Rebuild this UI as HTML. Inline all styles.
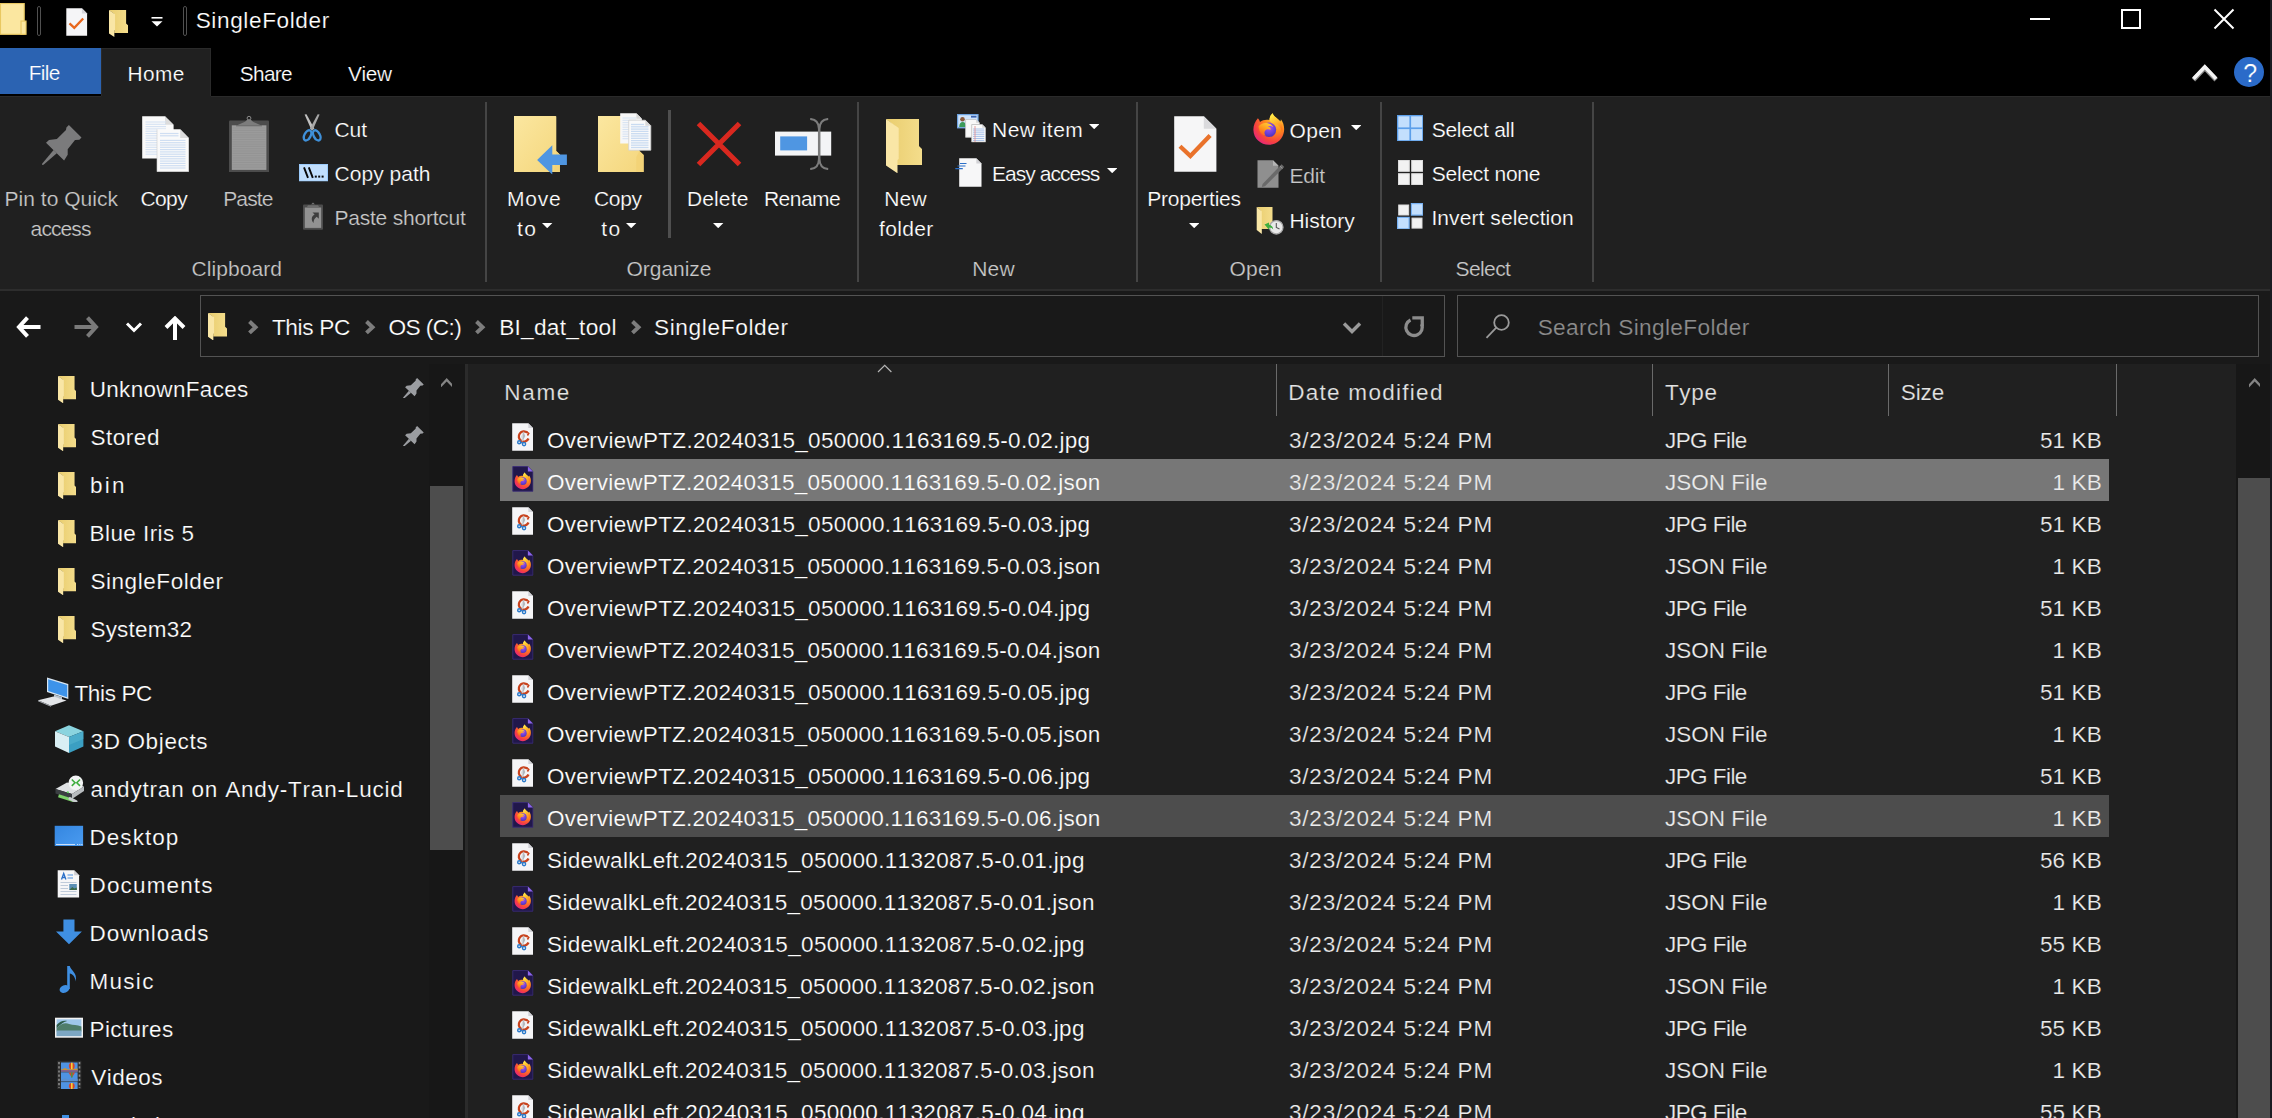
<!DOCTYPE html>
<html><head><meta charset="utf-8"><title>SingleFolder</title>
<style>
html,body{margin:0;padding:0;background:#000;}
body{width:2272px;height:1118px;position:relative;overflow:hidden;font-family:"Liberation Sans",sans-serif;font-kerning:none;}
body>div,body>span,body>svg{position:absolute;display:block;}
.t{white-space:pre;font-kerning:none;}
</style></head><body>
<svg width="0" height="0" style="left:0;top:0"><defs>
<linearGradient id="gfb" x1="0" y1="0" x2="1" y2="0"><stop offset="0" stop-color="#e9cd6e"/><stop offset="1" stop-color="#f4dd8c"/></linearGradient>
<linearGradient id="gfd" x1="0" y1="0" x2="1" y2="1"><stop offset="0" stop-color="#fbe7a0"/><stop offset="1" stop-color="#f4d67c"/></linearGradient>
<radialGradient id="gff" cx="0.75" cy="0.2" r="0.95"><stop offset="0" stop-color="#ffd03a"/><stop offset="0.4" stop-color="#ff8a1c"/><stop offset="0.75" stop-color="#f7413f"/><stop offset="1" stop-color="#e0208a"/></radialGradient>
<linearGradient id="gfy" x1="0.3" y1="0" x2="0.7" y2="1"><stop offset="0" stop-color="#fff14a"/><stop offset="0.5" stop-color="#ffb52b"/><stop offset="1" stop-color="#ff6a1c"/></linearGradient>
<radialGradient id="gfp" cx="0.5" cy="0.35" r="0.7"><stop offset="0" stop-color="#a855f0"/><stop offset="0.6" stop-color="#6a3fd8"/><stop offset="1" stop-color="#4a2fb0"/></radialGradient>
<linearGradient id="gfo" x1="0.8" y1="0" x2="0.2" y2="1"><stop offset="0" stop-color="#ffd23a"/><stop offset="0.5" stop-color="#ff9a1f"/><stop offset="1" stop-color="#ff5a1f"/></linearGradient>
<linearGradient id="gdesk" x1="0" y1="0" x2="1" y2="1"><stop offset="0" stop-color="#3486e0"/><stop offset="1" stop-color="#4a9bf0"/></linearGradient>

<symbol id="fold" viewBox="0 0 18.1 27" preserveAspectRatio="none"><path d="M0 0H16.3V13.4L18.1 15.2V23H5V4z" fill="url(#gfb)"/><path d="M0 0L5.8 4.2V19.9L5.1 20.3V27L0 23.4z" fill="#f9e6a6"/></symbol>

<symbol id="winfolder" viewBox="0 0 28 33" preserveAspectRatio="none">
<rect x="0.5" y="0.5" width="24.6" height="31.6" fill="#fbe7a0" stroke="#e9c861" stroke-width="1.2"/>
<rect x="21.8" y="18.5" width="5.2" height="13.6" fill="#fbe7a0" stroke="#e9c861" stroke-width="1.2"/>
</symbol>

<symbol id="propsmall" viewBox="0 0 22 28" preserveAspectRatio="none"><path d="M0.3 0.2h15.6l5.2 5.2v22.3h-20.8z" fill="#f5f5f7"/><path d="M15.9 0.2v5.2h5.2z" fill="#d5d5da"/>
<path d="M3.5 15.300L8.300 19.800 17.200 10.500" stroke="#e8661c" stroke-width="2.300" fill="none"/>
</symbol>

<symbol id="pinbig" viewBox="0 0 40 40" preserveAspectRatio="none">
<path d="M26.900 0L39.500 12.400L37.400 14.700L33 15L25.700 24.200L25.700 29.800L22.100 35.400L4 17.700L7 14.900L14.900 14L24 5.100L24.400 2.400z" fill="#7b7b7c"/>
<path d="M11.600 25L14.800 28.200L1.500 39.700L0 40L0.300 38.400z" fill="#7b7b7c"/>
</symbol>

<symbol id="copy" viewBox="0 0 47 56" preserveAspectRatio="none"><path d="M0.2 0.2h22.8l8.6 8.6v33.6h-31.4z" fill="#fafafa"/><path d="M23 0.2v8.6h8.6z" fill="#dcdcdc"/><path d="M3.5 6H24" stroke="#d5e2f3" stroke-width="1.1"/><path d="M3.5 8.3H24" stroke="#d5e2f3" stroke-width="1.1"/><path d="M3.5 10.6H24" stroke="#d5e2f3" stroke-width="1.1"/><path d="M3.5 12.9H24" stroke="#d5e2f3" stroke-width="1.1"/><path d="M3.5 15.2H24" stroke="#d5e2f3" stroke-width="1.1"/><path d="M3.5 17.5H24" stroke="#d5e2f3" stroke-width="1.1"/><path d="M3.5 19.8H24" stroke="#d5e2f3" stroke-width="1.1"/><path d="M3.5 22.1H24" stroke="#d5e2f3" stroke-width="1.1"/><path d="M3.5 24.4H24" stroke="#d5e2f3" stroke-width="1.1"/><path d="M3.5 26.7H24" stroke="#d5e2f3" stroke-width="1.1"/><path d="M3.5 29H24" stroke="#d5e2f3" stroke-width="1.1"/><path d="M3.5 31.3H24" stroke="#d5e2f3" stroke-width="1.1"/><path d="M3.5 33.6H24" stroke="#d5e2f3" stroke-width="1.1"/><path d="M3.5 35.9H24" stroke="#d5e2f3" stroke-width="1.1"/><path d="M3.5 38.2H24" stroke="#d5e2f3" stroke-width="1.1"/><path d="M15 13.3h23.2l8.6 8.6v33.8h-31.8z" fill="#fafafa"/><path d="M38.2 13.3v8.6h8.6z" fill="#dcdcdc"/><path d="M18 17.5H36.5" stroke="#cfdef2" stroke-width="1.2"/><path d="M18 19.8H36.5" stroke="#cfdef2" stroke-width="1.2"/><path d="M18 24.4H43.5" stroke="#cfdef2" stroke-width="1.2"/><path d="M18 26.7H43.5" stroke="#cfdef2" stroke-width="1.2"/><path d="M18 29H43.5" stroke="#cfdef2" stroke-width="1.2"/><path d="M18 31.3H43.5" stroke="#cfdef2" stroke-width="1.2"/><path d="M18 33.6H43.5" stroke="#cfdef2" stroke-width="1.2"/><path d="M18 35.9H43.5" stroke="#cfdef2" stroke-width="1.2"/><path d="M18 38.2H43.5" stroke="#cfdef2" stroke-width="1.2"/><path d="M18 40.5H43.5" stroke="#cfdef2" stroke-width="1.2"/><path d="M18 42.8H43.5" stroke="#cfdef2" stroke-width="1.2"/><path d="M18 45.1H43.5" stroke="#cfdef2" stroke-width="1.2"/><path d="M18 47.4H43.5" stroke="#cfdef2" stroke-width="1.2"/><path d="M18 49.7H43.5" stroke="#cfdef2" stroke-width="1.2"/><path d="M18 52H43.5" stroke="#cfdef2" stroke-width="1.2"/>
<path d="M15 13.300V55.700H46.800" stroke="#cfcfcf" stroke-width="0.6" fill="none"/>
</symbol>

<symbol id="paste" viewBox="0 0 40 58.500" preserveAspectRatio="none">
<circle cx="20" cy="4.200" r="1.900" fill="none" stroke="#8a8a8a" stroke-width="1"/>
<rect x="0" y="6.500" width="40" height="52" rx="1" fill="#4c4c4c"/>
<rect x="2.800" y="11.300" width="34.600" height="44.600" fill="#9b9b9b"/><path d="M3.5 14H36.5" stroke="#929292" stroke-width="0.8"/><path d="M3.5 16.3H36.5" stroke="#929292" stroke-width="0.8"/><path d="M3.5 18.6H36.5" stroke="#929292" stroke-width="0.8"/><path d="M3.5 20.9H36.5" stroke="#929292" stroke-width="0.8"/><path d="M3.5 23.2H36.5" stroke="#929292" stroke-width="0.8"/><path d="M3.5 25.5H36.5" stroke="#929292" stroke-width="0.8"/><path d="M3.5 27.8H36.5" stroke="#929292" stroke-width="0.8"/><path d="M3.5 30.1H36.5" stroke="#929292" stroke-width="0.8"/><path d="M3.5 32.4H36.5" stroke="#929292" stroke-width="0.8"/><path d="M3.5 34.7H36.5" stroke="#929292" stroke-width="0.8"/><path d="M3.5 37H36.5" stroke="#929292" stroke-width="0.8"/><path d="M3.5 39.3H36.5" stroke="#929292" stroke-width="0.8"/><path d="M3.5 41.6H36.5" stroke="#929292" stroke-width="0.8"/><path d="M3.5 43.9H36.5" stroke="#929292" stroke-width="0.8"/><path d="M3.5 46.2H36.5" stroke="#929292" stroke-width="0.8"/><path d="M3.5 48.5H36.5" stroke="#929292" stroke-width="0.8"/><path d="M3.5 50.8H36.5" stroke="#929292" stroke-width="0.8"/><path d="M3.5 53.1H36.5" stroke="#929292" stroke-width="0.8"/>
<path d="M7 11.800L16 7.800L18.500 5.500h3L24 7.800L33 11.800z" fill="#7c7c7c"/>
<path d="M7 11.800h26" stroke="#6a6a6a" stroke-width="1"/>
</symbol>

<symbol id="cut" viewBox="0 0 21 28" preserveAspectRatio="none">
<path d="M2.600 0.600L4.500 0.200L12.400 14.800L9.700 16.600z" fill="#c0c0c0"/>
<path d="M17.600 0.600L15.700 0.200L7.800 14.800L10.500 16.600z" fill="#a8a8a8"/>
<ellipse cx="5.500" cy="21.400" rx="3.100" ry="5.500" transform="rotate(28 5.500 21.400)" fill="none" stroke="#3f90d9" stroke-width="2.400"/>
<ellipse cx="14.800" cy="21.400" rx="3.100" ry="5.500" transform="rotate(-28 14.800 21.400)" fill="none" stroke="#3f90d9" stroke-width="2.400"/>
</symbol>

<symbol id="copypath" viewBox="0 0 29 17.500" preserveAspectRatio="none">
<rect x="0.500" y="0.500" width="28" height="16.500" fill="#c2dffd" stroke="#9ccbfb" stroke-width="1"/>
<path d="M5 3.300L9 13.800M9.800 3.300L13.800 13.800" stroke="#0a0a0a" stroke-width="1.900"/>
<rect x="15.800" y="11.600" width="2" height="2" fill="#0a0a0a"/><rect x="19.200" y="11.600" width="2" height="2" fill="#0a0a0a"/><rect x="22.600" y="11.600" width="2" height="2" fill="#0a0a0a"/>
</symbol>

<symbol id="pasteshort" viewBox="0 0 20 28" preserveAspectRatio="none">
<path d="M8 2.500L10 0.500L12 2.500z" fill="#777"/>
<rect x="0" y="2.500" width="20" height="25.300" rx="1" fill="#4d4d4d"/>
<rect x="1.800" y="5.500" width="16.400" height="20.400" fill="#929292"/>
<path d="M5 3.200h10l1.500 2.600h-13z" fill="#6e6e6e"/>
<path d="M9.500 10.500h6.300v6.300l-2.100-2.100c-2 1.500-3.200 3.300-3.200 6.300-2.800-3-2-7 1.100-8.400z" fill="#3d3d3d"/>
</symbol>

<symbol id="moveto" viewBox="0 0 54 58.500" preserveAspectRatio="none">
<path d="M0 0H41.500Q42.300 0 42.300 0.800V35L45.800 38.500V56H0z" fill="url(#gfd)"/>
<path d="M42.300 35L45.800 38.500V56H40z" fill="#f3d377"/>
<path d="M23.100 44.100L38.300 29.200V38.600H52.900V49.100H38.300V58.500z" fill="#4f96e2"/>
</symbol>

<symbol id="copyto" viewBox="0 0 54 59" preserveAspectRatio="none">
<path d="M0 3H41.500V38L45.600 42V59H0z" fill="url(#gfd)"/>
<path d="M38.300 44L41.500 38L45.600 42V59H38.300z" fill="#f3d377"/><path d="M22.2 0.2h16.2l5.5 5.5v24.7h-21.7z" fill="#f7f7f7"/><path d="M38.4 0.2v5.5h5.5z" fill="#d8d8d8"/><path d="M24.5 5H38" stroke="#d7e3f3" stroke-width="1.1"/><path d="M24.5 7.3H38" stroke="#d7e3f3" stroke-width="1.1"/><path d="M24.5 9.6H38" stroke="#d7e3f3" stroke-width="1.1"/><path d="M24.5 11.9H38" stroke="#d7e3f3" stroke-width="1.1"/><path d="M24.5 14.2H38" stroke="#d7e3f3" stroke-width="1.1"/><path d="M24.5 16.5H38" stroke="#d7e3f3" stroke-width="1.1"/><path d="M24.5 18.8H38" stroke="#d7e3f3" stroke-width="1.1"/><path d="M24.5 21.1H38" stroke="#d7e3f3" stroke-width="1.1"/><path d="M24.5 23.4H38" stroke="#d7e3f3" stroke-width="1.1"/><path d="M24.5 25.7H38" stroke="#d7e3f3" stroke-width="1.1"/><path d="M30.7 7.2h16.6l5.5 5.5v24.5h-22.1z" fill="#fafafa" stroke="#d0d0d0" stroke-width="0.8"/><path d="M47.3 7.2v5.5h5.5z" fill="#d8d8d8"/><path d="M33 11.5H46" stroke="#c9dbf1" stroke-width="1.3"/><path d="M33 13.8H50.5" stroke="#c9dbf1" stroke-width="1.3"/><path d="M33 16.1H50.5" stroke="#c9dbf1" stroke-width="1.3"/><path d="M33 18.4H50.5" stroke="#c9dbf1" stroke-width="1.3"/><path d="M33 20.7H50.5" stroke="#c9dbf1" stroke-width="1.3"/><path d="M33 23H50.5" stroke="#c9dbf1" stroke-width="1.3"/><path d="M33 25.3H50.5" stroke="#c9dbf1" stroke-width="1.3"/><path d="M33 27.6H50.5" stroke="#c9dbf1" stroke-width="1.3"/><path d="M33 29.9H50.5" stroke="#c9dbf1" stroke-width="1.3"/><path d="M33 32.2H50.5" stroke="#c9dbf1" stroke-width="1.3"/><path d="M33 34.5H50.5" stroke="#c9dbf1" stroke-width="1.3"/>
</symbol>

<symbol id="rename" viewBox="0 0 57 52" preserveAspectRatio="none">
<rect x="0" y="13.600" width="56.200" height="24" fill="#f3f4f6"/>
<rect x="5.200" y="18.400" width="26.900" height="14" fill="#4f96e2"/>
<path d="M35.200 1C40.500 1.300 43.800 4.500 44 11V41C43.800 47.500 40.500 50.700 35.200 51M53.200 1C47.900 1.300 44.600 4.500 44.400 11V41C44.600 47.500 47.900 50.700 53.200 51" stroke="#7c7c7c" stroke-width="2.100" fill="none"/>
</symbol>

<symbol id="newfolder" viewBox="0 0 36.400 54.300" preserveAspectRatio="none">
<path d="M0 0H33V27L36.400 30.400V46H10V8z" fill="url(#gfb)"/>
<path d="M0 0L12.700 9V40L11.500 41V54.300L0 46.500z" fill="#f9e6a6"/>
</symbol>

<symbol id="newitem" viewBox="0 0 29 28.500" preserveAspectRatio="none">
<rect x="0.600" y="0.600" width="20.400" height="13.200" fill="#cfe3fb" stroke="#6ea3e0" stroke-width="1.200"/>
<circle cx="5.500" cy="5.200" r="2.300" fill="#8a5a3c"/><path d="M2.200 13c0-3.500 1.500-5 3.500-5s3.500 1.500 3.500 5z" fill="#3c9a5a"/>
<rect x="14" y="1.800" width="5.500" height="1.800" fill="#3a62b0"/><path d="M8.6 5.5h10.5l3.3 3.3v14.5h-13.8z" fill="#f8f8f8" stroke="#c4c4c4" stroke-width="0.8"/><path d="M19.1 5.5v3.3h3.3z" fill="#d5d5d5"/><path d="M14.7 10.5h10.5l3.3 3.3v14.3h-13.8z" fill="#fbfbfb" stroke="#bdbdbd" stroke-width="0.8"/><path d="M25.2 10.5v3.3h3.3z" fill="#d5d5d5"/><path d="M16 15H27.3" stroke="#9fbbe8" stroke-width="0.9"/><path d="M16 16.9H27.3" stroke="#9fbbe8" stroke-width="0.9"/><path d="M16 18.8H27.3" stroke="#9fbbe8" stroke-width="0.9"/><path d="M16 20.7H27.3" stroke="#9fbbe8" stroke-width="0.9"/><path d="M16 22.6H27.3" stroke="#9fbbe8" stroke-width="0.9"/><path d="M16 24.5H27.3" stroke="#9fbbe8" stroke-width="0.9"/><path d="M16 26.4H27.3" stroke="#9fbbe8" stroke-width="0.9"/>
<path d="M18 12v16" stroke="#e58a8a" stroke-width="0.8"/>
</symbol>

<symbol id="easy" viewBox="0 0 27 29" preserveAspectRatio="none"><path d="M4.2 0.3h17.1l5.2 5.2v23.3h-22.3z" fill="#f7f7f8"/><path d="M21.3 0.3v5.2h5.2z" fill="#d2d2d6"/>
<path d="M5 5.500h6.500M2.500 8h8M0.300 10.600h7.500" stroke="#2b6fc8" stroke-width="1.100"/>
</symbol>

<symbol id="propbig" viewBox="0 0 43 56" preserveAspectRatio="none"><path d="M0.2 0.2h29.6l12.6 12.6v42.9h-42.2z" fill="#f6f6f7"/><path d="M29.8 0.2v12.6h12.6z" fill="#dadadd"/>
<path d="M6 30.200L16.400 40 36.100 19.500" stroke="#e9722b" stroke-width="4.300" fill="none"/>
</symbol>

<symbol id="firefox" viewBox="0 0 32 32" preserveAspectRatio="none"><path d="M4.900 5.300C6 6.500 6.600 7.700 7 9C9.500 7 13 6.200 16.500 7C16.500 4.500 17.800 1.800 19.700 0.200C20.500 3.500 24.500 5 27.200 8.500C27.800 8 28 7 27.900 6.200C30.500 9.500 31.600 14 31 18.500C30 26 23.500 31.800 16 31.800C7.500 31.800 0.600 25.500 0.400 17C0.300 12.500 2 8.500 4.900 5.300z" fill="url(#gff)"/><path d="M19.700 0.200C20.500 3.500 24.500 5 27.200 8.500C29.500 11.500 30 15.500 29 19.500C28.500 15 26 12 22 11C19 10.200 17 8.500 16.500 7C16.500 4.500 17.800 1.800 19.700 0.200z" fill="url(#gfy)"/><circle cx="16" cy="16.800" r="7.200" fill="url(#gfp)"/><path d="M5.500 13.500C7.500 10.500 11.500 9.300 15 10.200C17.500 10.800 19.500 12.300 20.300 14.200C18.500 13 16.500 12.800 15 13.500C17 14 18 15.500 17.500 16.800C16 15.800 13.500 16 12.300 17.500C11 19 11.300 21.300 12.800 22.800C9 22.300 6.300 19.500 5.500 13.500z" fill="url(#gfo)"/></symbol>

<symbol id="edit" viewBox="0 0 28 28" preserveAspectRatio="none"><path d="M0.5 0.2h15.5l5.5 5.5v22h-21z" fill="#8f8f8f"/><path d="M16 0.2v5.5h5.5z" fill="#b5b5b5"/>
<path d="M24.600 4.300L27.200 6.900L8 26.200L4.800 27L5.600 24z" fill="#6a6a6a"/>
<path d="M22.900 6L25.500 8.600" stroke="#9a9a9a" stroke-width="1"/>
</symbol>

<symbol id="history" viewBox="0 0 28.500 28" preserveAspectRatio="none">
<path d="M0.700 0H16.500V13L17 22H5V4z" fill="url(#gfb)"/>
<path d="M0.700 0L5.800 4.200V27L0.700 23z" fill="#f9e6a6"/>
<circle cx="20.300" cy="20.300" r="6.700" fill="#e9e9e9" stroke="#a9a9a9" stroke-width="1.300"/>
<path d="M20.300 16v4.500l3.200 1.500" stroke="#555" stroke-width="1.100" fill="none"/>
<path d="M8.500 17.500l4.500-2v2.300c2.300.3 4 2 4.200 4.600-1.200-1.500-2.500-2-4.200-2v2.400z" fill="#3fae3f"/>
</symbol>

<symbol id="selall" viewBox="0 0 26.500 26.500" preserveAspectRatio="none">
<rect x="0" y="0" width="26.500" height="26.500" fill="#5c9fea"/>
<rect x="1.300" y="1.300" width="11.100" height="11.100" fill="#c3dffd"/>
<rect x="14.100" y="1.300" width="11.100" height="11.100" fill="#c3dffd"/>
<rect x="1.300" y="14.100" width="11.100" height="11.100" fill="#c3dffd"/>
<rect x="14.100" y="14.100" width="11.100" height="11.100" fill="#c3dffd"/>
</symbol>

<symbol id="selnone" viewBox="0 0 25 25" preserveAspectRatio="none">
<rect x="0.500" y="0.500" width="10.800" height="10.800" fill="#f2f2f2" stroke="#dcdcdc" stroke-width="1"/>
<rect x="13.700" y="0.500" width="10.800" height="10.800" fill="#f2f2f2" stroke="#dcdcdc" stroke-width="1"/>
<rect x="0.500" y="13.700" width="10.800" height="10.800" fill="#f2f2f2" stroke="#dcdcdc" stroke-width="1"/>
<rect x="13.700" y="13.700" width="10.800" height="10.800" fill="#f2f2f2" stroke="#dcdcdc" stroke-width="1"/>
</symbol>

<symbol id="selinv" viewBox="0 0 26.500 26.500" preserveAspectRatio="none">
<rect x="1.700" y="2" width="10" height="10" fill="#f2f2f2" stroke="#dcdcdc" stroke-width="1"/>
<rect x="14.400" y="0.600" width="11.500" height="11.500" fill="#c3dffd" stroke="#76b1f3" stroke-width="1.200"/>
<rect x="0.600" y="14.400" width="11.500" height="11.500" fill="#c3dffd" stroke="#76b1f3" stroke-width="1.200"/>
<rect x="15" y="15.100" width="10" height="10" fill="#f2f2f2" stroke="#dcdcdc" stroke-width="1"/>
</symbol>

<symbol id="pinsm" viewBox="0 0 40 40" preserveAspectRatio="none">
<path d="M26.900 0L39.500 12.400L37.400 14.700L33 15L25.700 24.200L25.700 29.800L22.100 35.400L4 17.700L7 14.900L14.900 14L24 5.100L24.400 2.400z" fill="#9b9da1"/>
<path d="M11.300 24.500L15.300 28.500L2 39.800L0 40L0.300 37.800z" fill="#9b9da1"/>
</symbol>

<symbol id="thispc" viewBox="0 0 32 30" preserveAspectRatio="none">
<path d="M10 0.500L31.300 7V22L10 15z" fill="#d9e6f2"/>
<path d="M11.200 2.300L30.200 8V20.200L11.200 14z" fill="#3d93ea"/>
<path d="M17 17.500l8 2.500v2.200l-8-1.500z" fill="#b9c4cf"/>
<path d="M1 23.200L16.500 19.500L29.500 23.500L14 28.800z" fill="#e3e5e8"/>
<path d="M1 23.200L14 28.800v1L1 24.200z" fill="#a9adb3"/>
</symbol>

<symbol id="obj3d" viewBox="0 0 31 31" preserveAspectRatio="none">
<path d="M1 8.200L15 2.200L29.400 8.200L15 14z" fill="#8ad4df"/>
<path d="M1 8.200L15 14V30L1 23.500z" fill="#d9eff4"/>
<path d="M29.400 8.200L15 14V30L29.400 23.500z" fill="#3b9fc2"/>
<path d="M15 14L29.400 8.200V16L15 22z" fill="#56b5cf" opacity="0.6"/>
</symbol>

<symbol id="netdrive" viewBox="0 0 31 31" preserveAspectRatio="none">
<path d="M1.500 18L13 11.500L30 15.500L18 23z" fill="#dfe2e4"/>
<path d="M1.500 18L18 23V28L1.500 22.500z" fill="#3b3f42"/>
<path d="M18 23L30 15.500V20L18 28z" fill="#b8bcbf"/>
<circle cx="21.800" cy="11.800" r="7.300" fill="#f3f5f5"/>
<path d="M17.800 8.500l3.200 3.200-3.200 3.200M26 8.500l-3.200 3.200L26 14.900" stroke="#3fae3f" stroke-width="1.600" fill="none"/>
<path d="M4.500 24.800L20 29.800" stroke="#7dd26a" stroke-width="3"/>
<path d="M16 27.500L22 30.500" stroke="#c9cdd0" stroke-width="3" stroke-linecap="round"/>
<rect x="13" y="20.500" width="2" height="1.500" fill="#5fd35f" transform="rotate(18 14 21)"/>
</symbol>

<symbol id="desktop" viewBox="0 0 31 31" preserveAspectRatio="none">
<rect x="0.700" y="6.800" width="28.400" height="20.200" fill="url(#gdesk)"/>
<path d="M2 25.500h19M23 25.500h1.200M25.200 25.500h1.200M27.300 25.500h1.200" stroke="#dbe9fa" stroke-width="0.900"/>
</symbol>

<symbol id="docs" viewBox="0 0 31 31" preserveAspectRatio="none"><path d="M3.7 3.2h16.4l5 5v22.3h-21.4z" fill="#f6f6f7"/><path d="M20.1 3.2v5h5z" fill="#cfcfd4"/>
<path d="M7.500 12.500l2.200-6 2.200 6M8.300 10.500h2.800" stroke="#2b6fc8" stroke-width="1.300" fill="none"/>
<path d="M13.500 8h5.500M13.500 11h5.500" stroke="#4f8fdd" stroke-width="1.100"/>
<path d="M6.500 15.500h16M6.500 18.500h7.500M6.500 21.500h7.500M6.500 24.500h16M6.500 27.500h16" stroke="#b9c6d6" stroke-width="0.900"/>
<rect x="15.300" y="17" width="7.500" height="6" fill="#5b8fb5"/><path d="M15.300 23l3-3 2 1.500 2.500-1v2.500z" fill="#3c6a4a"/>
</symbol>

<symbol id="downl" viewBox="0 0 31 31" preserveAspectRatio="none">
<path d="M9.400 4.500h11.100v12h7.400L15 29.200 2 16.500h7.400z" fill="#3f8fe2"/>
</symbol>

<symbol id="music" viewBox="0 0 31 31" preserveAspectRatio="none">
<ellipse cx="10.500" cy="26" rx="5" ry="3.700" transform="rotate(-20 10.500 26)" fill="#3f8fe2"/>
<path d="M13.200 26V3h2.600c.6 4.500 8.400 6.800 5.600 15.500 0-5-3-7.500-5.600-8V26z" fill="#3f8fe2"/>
</symbol>

<symbol id="pics" viewBox="0 0 31 31" preserveAspectRatio="none">
<rect x="1" y="6.700" width="28" height="20" fill="#f2f2f2"/>
<rect x="2.600" y="8.300" width="24.800" height="16.800" fill="#9fc7ea"/>
<path d="M2.600 17.500c4-5 9-6.500 12.500-4.500 4 1.500 8 .5 12.300 2.500v5H2.600z" fill="#4f7d6a"/>
<path d="M2.600 19.500h24.800v5.600H2.600z" fill="#7da7c4"/>
<path d="M2.600 14c3-3.500 7-5 10.500-4-4 1-7 3.500-10.500 7.500z" fill="#2f5d4a"/>
</symbol>

<symbol id="videos" viewBox="0 0 31 31" preserveAspectRatio="none">
<rect x="3.300" y="1.800" width="24" height="28.200" fill="#2e2e2e"/>
<rect x="7" y="3.500" width="16.600" height="9" fill="#4f93e3"/><rect x="7" y="13.300" width="16.600" height="9" fill="#4f93e3"/><rect x="7" y="23.100" width="16.600" height="6.900" fill="#4f93e3"/>
<path d="M7 10.800l4-1.800 3 1.500 9.600-1v3H7z" fill="#c8913a"/><path d="M7 12.500h16.600v-1.200H7z" fill="#6a4fb0"/>
<ellipse cx="17.800" cy="7" rx="2.900" ry="3.200" fill="#d8462a"/><path d="M17.800 3.800v6.400" stroke="#f3d23a" stroke-width="1.600"/>
<path d="M14.500 13.500h6.600l-3.300 5.200z" fill="#d8462a"/><path d="M17.800 13.500v5" stroke="#3f9a4a" stroke-width="1.400"/>
<path d="M7 20.800l4-1.500 3 1.200 9.600-0.800v2.600H7z" fill="#5a8fd0"/>
<ellipse cx="17.800" cy="27" rx="2.900" ry="3" fill="#d8462a"/><path d="M17.800 24v6" stroke="#f3d23a" stroke-width="1.600"/>
<path d="M5 3v26M25.500 3v26" stroke="#8a8a8a" stroke-width="1.600" stroke-dasharray="2.200 2"/>
</symbol>

<symbol id="osdrive" viewBox="0 0 31 31" preserveAspectRatio="none">
<rect x="8" y="8" width="7" height="6" fill="#3f8fe2"/>
</symbol>

<symbol id="jpgico" viewBox="0 0 21.500 28" preserveAspectRatio="none"><path d="M0.2 0.2h16.2l4.8 4.8v22.8h-21z" fill="#f5f5f7"/><path d="M16.4 0.2v4.8h4.8z" fill="#d3d3d8"/>
<path d="M15.300 9.700A5.100 5.100 0 1 0 16.600 15.500" fill="none" stroke="#c8421d" stroke-width="2.300"/>
<path d="M14.200 8.400L16.800 10.500L15.500 12.500" fill="none" stroke="#c8421d" stroke-width="1.600"/>
<path d="M11.400 8.300L13.300 13L10.600 18.600L9.600 18.200z" fill="#b4b7bd"/>
<path d="M11.400 8.300L9.300 13.500L10.600 18.600z" fill="#d5d7db"/>
<circle cx="7.200" cy="19.200" r="1.500" fill="none" stroke="#2a79ca" stroke-width="1.400"/>
<circle cx="12.100" cy="21.100" r="1.600" fill="none" stroke="#2a79ca" stroke-width="1.400"/>
<path d="M8.600 19.400l2.200 0.800" stroke="#2a79ca" stroke-width="1.300"/>
</symbol>

<symbol id="jsonico" viewBox="0 0 22 26.500" preserveAspectRatio="none">
<path d="M0.800 0.600H16.200L21.300 5.700V25.700H0.800z" fill="#21174b" stroke="#3a2c78" stroke-width="0.900"/>
<path d="M16.200 0.600V5.700H21.300z" fill="#8d66ea"/>
<g transform="translate(2.400 6.400) scale(0.540)"><path d="M4.900 5.300C6 6.500 6.600 7.700 7 9C9.500 7 13 6.200 16.500 7C16.500 4.500 17.800 1.800 19.700 0.200C20.500 3.500 24.500 5 27.200 8.500C27.800 8 28 7 27.900 6.200C30.500 9.500 31.600 14 31 18.500C30 26 23.500 31.800 16 31.800C7.500 31.800 0.600 25.500 0.400 17C0.300 12.500 2 8.500 4.900 5.300z" fill="url(#gff)"/><path d="M19.700 0.200C20.500 3.500 24.500 5 27.200 8.500C29.500 11.500 30 15.500 29 19.500C28.500 15 26 12 22 11C19 10.200 17 8.500 16.500 7C16.500 4.500 17.800 1.800 19.700 0.200z" fill="url(#gfy)"/><circle cx="16" cy="16.800" r="7.200" fill="url(#gfp)"/><path d="M5.500 13.500C7.500 10.500 11.500 9.300 15 10.200C17.500 10.800 19.500 12.300 20.300 14.200C18.500 13 16.500 12.800 15 13.500C17 14 18 15.500 17.500 16.800C16 15.800 13.500 16 12.300 17.500C11 19 11.300 21.300 12.800 22.800C9 22.300 6.300 19.500 5.500 13.500z" fill="url(#gfo)"/></g>
</symbol>

</defs></svg>
<div style="left:0px;top:0px;width:2270px;height:48px;background:#000;"></div>
<div style="left:0px;top:47.9px;width:101.2px;height:46px;background:#2b63b2;"></div>
<div style="left:101.2px;top:47.9px;width:109.9px;height:48.2px;background:#202020;border:1px solid #2a2a2a;border-bottom:none;box-sizing:border-box;"></div>
<div style="left:0px;top:96px;width:2270px;height:193px;background:#202020;"></div>
<div style="left:0px;top:289px;width:2270px;height:1.5px;background:#2d2d2d;"></div>
<div style="left:0px;top:96px;width:101.2px;height:1px;background:#2a2a2a;"></div>
<div style="left:211.1px;top:96px;width:2058.9px;height:1px;background:#2a2a2a;"></div>
<div style="left:0px;top:290.5px;width:2270px;height:74px;background:#191919;"></div>
<div style="left:0px;top:364px;width:465px;height:754px;background:#191919;"></div>
<div style="left:429px;top:364px;width:36px;height:754px;background:#171717;"></div>
<div style="left:430px;top:486px;width:32.5px;height:364px;background:#4d4d4d;"></div>
<div style="left:465px;top:364px;width:2.5px;height:754px;background:#2b2b2b;"></div>
<div style="left:467.5px;top:364px;width:1768.5px;height:754px;background:#202020;"></div>
<div style="left:2236px;top:364px;width:34px;height:754px;background:#171717;"></div>
<div style="left:2238px;top:478px;width:32px;height:640px;background:#4d4d4d;"></div>
<div style="left:2270px;top:0px;width:2px;height:1118px;background:#1b1b22;"></div>
<svg style="left:0.4px;top:3px;" width="27" height="32.2"><use href="#winfolder" width="100%" height="100%"/></svg>
<div style="left:37.2px;top:6.4px;width:3.8px;height:29.6px;background:#000;border:1px solid #505050;border-radius:2px;box-sizing:border-box;"></div>
<svg style="left:66px;top:8px;" width="22" height="28"><use href="#propsmall" width="100%" height="100%"/></svg>
<svg style="left:109px;top:10px;" width="19" height="27"><use href="#fold" width="100%" height="100%"/></svg>
<svg style="left:151px;top:17px;" width="12" height="10" viewBox="0 0 12 10"><rect x="0.5" y="0" width="11" height="1.6" fill="#fff"/><path d="M0.5 4.2h11l-5.5 5.3z" fill="#fff"/></svg>
<div style="left:183.1px;top:6.4px;width:3.8px;height:29.6px;background:#000;border:1px solid #505050;border-radius:2px;box-sizing:border-box;"></div>
<span class="t" style="left:195.67px;top:6.27px;font-size:22.6px;line-height:29px;color:#ffffff;letter-spacing:0.611px;-webkit-text-stroke:0.2px #000;">SingleFolder</span>
<div style="left:2030px;top:18px;width:20px;height:2px;background:#fff;"></div>
<div style="left:2121px;top:9px;width:20px;height:20px;background:transparent;border:2px solid #fff;box-sizing:border-box;"></div>
<svg style="left:2213px;top:8px;" width="22" height="22" viewBox="0 0 22 22"><path d="M1.5 1.5l19 19M20.5 1.5l-19 19" stroke="#fff" stroke-width="2" fill="none"/></svg>
<svg style="left:2190px;top:63px;" width="30" height="20" viewBox="0 0 30 20"><path d="M3.500 16.800L14.800 4.800l11.300 12" stroke="#8a8a8a" stroke-width="4.600" fill="none"/><path d="M3.500 15.800L14.800 3.800l11.300 12" stroke="#f4f4f4" stroke-width="3.600" fill="none"/></svg>
<div style="left:2234px;top:57px;width:30px;height:30px;border-radius:50%;background:#2b6bc9;"></div>
<span class="t" style="left:2243.17px;top:56.63px;font-size:25px;line-height:32px;color:#ffffff;-webkit-text-stroke:0.2px #2b6bc9;">?</span>
<span class="t" style="left:28.79px;top:59.09px;font-size:20.8px;line-height:27px;color:#ffffff;letter-spacing:-0.695px;-webkit-text-stroke:0.2px #2b63b2;">File</span>
<span class="t" style="left:127.59px;top:60.19px;font-size:20.8px;line-height:27px;color:#ffffff;letter-spacing:0.382px;-webkit-text-stroke:0.2px #202020;">Home</span>
<span class="t" style="left:239.86px;top:59.99px;font-size:20.8px;line-height:27px;color:#ffffff;letter-spacing:-0.709px;-webkit-text-stroke:0.2px #000;">Share</span>
<span class="t" style="left:347.91px;top:59.99px;font-size:20.8px;line-height:27px;color:#ffffff;letter-spacing:-0.348px;-webkit-text-stroke:0.2px #000;">View</span>
<div style="left:485px;top:102px;width:1.6px;height:180px;background:#454545;"></div>
<div style="left:857.2px;top:102px;width:1.6px;height:180px;background:#454545;"></div>
<div style="left:1136.2px;top:102px;width:1.6px;height:180px;background:#454545;"></div>
<div style="left:1380.2px;top:102px;width:1.6px;height:180px;background:#454545;"></div>
<div style="left:1592.3px;top:102px;width:1.6px;height:180px;background:#454545;"></div>
<div style="left:668px;top:110px;width:3px;height:128px;background:#4f4f4f;"></div>
<span class="t" style="left:4.58px;top:184.92px;font-size:21px;line-height:27px;color:#c8c8c8;letter-spacing:0.016px;-webkit-text-stroke:0.2px #202020;">Pin to Quick</span>
<span class="t" style="left:30.61px;top:214.72px;font-size:21px;line-height:27px;color:#c8c8c8;letter-spacing:-0.902px;-webkit-text-stroke:0.2px #202020;">access</span>
<span class="t" style="left:140.43px;top:184.92px;font-size:21px;line-height:27px;color:#ffffff;letter-spacing:-0.572px;-webkit-text-stroke:0.2px #202020;">Copy</span>
<span class="t" style="left:223.28px;top:184.92px;font-size:21px;line-height:27px;color:#c8c8c8;letter-spacing:-0.911px;-webkit-text-stroke:0.2px #202020;">Paste</span>
<span class="t" style="left:334.53px;top:116.02px;font-size:21px;line-height:27px;color:#ffffff;letter-spacing:-0.079px;-webkit-text-stroke:0.2px #202020;">Cut</span>
<span class="t" style="left:334.53px;top:159.92px;font-size:21px;line-height:27px;color:#ffffff;letter-spacing:0.037px;-webkit-text-stroke:0.2px #202020;">Copy path</span>
<span class="t" style="left:334.48px;top:203.82px;font-size:21px;line-height:27px;color:#c8c8c8;letter-spacing:-0.220px;-webkit-text-stroke:0.2px #202020;">Paste shortcut</span>
<span class="t" style="left:191.53px;top:255.12px;font-size:21px;line-height:27px;color:#c8c8c8;letter-spacing:0.067px;-webkit-text-stroke:0.2px #202020;">Clipboard</span>
<span class="t" style="left:506.88px;top:184.92px;font-size:21px;line-height:27px;color:#ffffff;letter-spacing:0.801px;-webkit-text-stroke:0.2px #202020;">Move</span>
<span class="t" style="left:517.08px;top:214.72px;font-size:21px;line-height:27px;color:#ffffff;letter-spacing:1.286px;-webkit-text-stroke:0.2px #202020;">to</span>
<span class="t" style="left:593.93px;top:184.92px;font-size:21px;line-height:27px;color:#ffffff;letter-spacing:-0.306px;-webkit-text-stroke:0.2px #202020;">Copy</span>
<span class="t" style="left:601.18px;top:214.72px;font-size:21px;line-height:27px;color:#ffffff;letter-spacing:1.486px;-webkit-text-stroke:0.2px #202020;">to</span>
<span class="t" style="left:686.88px;top:184.92px;font-size:21px;line-height:27px;color:#ffffff;letter-spacing:0.151px;-webkit-text-stroke:0.2px #202020;">Delete</span>
<span class="t" style="left:763.98px;top:184.92px;font-size:21px;line-height:27px;color:#ffffff;letter-spacing:-0.524px;-webkit-text-stroke:0.2px #202020;">Rename</span>
<span class="t" style="left:626.41px;top:255.12px;font-size:21px;line-height:27px;color:#c8c8c8;letter-spacing:-0.012px;-webkit-text-stroke:0.2px #202020;">Organize</span>
<span class="t" style="left:884.28px;top:184.92px;font-size:21px;line-height:27px;color:#ffffff;letter-spacing:0.181px;-webkit-text-stroke:0.2px #202020;">New</span>
<span class="t" style="left:879.10px;top:214.72px;font-size:21px;line-height:27px;color:#ffffff;letter-spacing:0.343px;-webkit-text-stroke:0.2px #202020;">folder</span>
<span class="t" style="left:992.08px;top:116.02px;font-size:21px;line-height:27px;color:#ffffff;letter-spacing:0.456px;-webkit-text-stroke:0.2px #202020;">New item</span>
<span class="t" style="left:992.08px;top:159.92px;font-size:21px;line-height:27px;color:#ffffff;letter-spacing:-0.970px;-webkit-text-stroke:0.2px #202020;">Easy access</span>
<span class="t" style="left:972.28px;top:255.12px;font-size:21px;line-height:27px;color:#c8c8c8;letter-spacing:0.181px;-webkit-text-stroke:0.2px #202020;">New</span>
<span class="t" style="left:1147.28px;top:184.92px;font-size:21px;line-height:27px;color:#ffffff;letter-spacing:-0.214px;-webkit-text-stroke:0.2px #202020;">Properties</span>
<span class="t" style="left:1289.61px;top:116.92px;font-size:21px;line-height:27px;color:#ffffff;letter-spacing:0.262px;-webkit-text-stroke:0.2px #202020;">Open</span>
<span class="t" style="left:1289.48px;top:161.92px;font-size:21px;line-height:27px;color:#c8c8c8;letter-spacing:-0.170px;-webkit-text-stroke:0.2px #202020;">Edit</span>
<span class="t" style="left:1289.48px;top:206.62px;font-size:21px;line-height:27px;color:#ffffff;letter-spacing:-0.012px;-webkit-text-stroke:0.2px #202020;">History</span>
<span class="t" style="left:1229.41px;top:255.12px;font-size:21px;line-height:27px;color:#c8c8c8;letter-spacing:0.329px;-webkit-text-stroke:0.2px #202020;">Open</span>
<span class="t" style="left:1431.65px;top:116.02px;font-size:21px;line-height:27px;color:#ffffff;letter-spacing:-0.239px;-webkit-text-stroke:0.2px #202020;">Select all</span>
<span class="t" style="left:1431.65px;top:159.92px;font-size:21px;line-height:27px;color:#ffffff;letter-spacing:-0.203px;-webkit-text-stroke:0.2px #202020;">Select none</span>
<span class="t" style="left:1431.46px;top:203.82px;font-size:21px;line-height:27px;color:#ffffff;letter-spacing:0.071px;-webkit-text-stroke:0.2px #202020;">Invert selection</span>
<span class="t" style="left:1455.55px;top:255.12px;font-size:21px;line-height:27px;color:#c8c8c8;letter-spacing:-0.592px;-webkit-text-stroke:0.2px #202020;">Select</span>
<svg style="left:542.3px;top:223.3px;" width="10.4" height="5.2" viewBox="0 0 10.4 5.2"><path d="M0 0h10.4l-5.2 5.2z" fill="#fff"/></svg>
<svg style="left:626.3px;top:223.3px;" width="10.4" height="5.2" viewBox="0 0 10.4 5.2"><path d="M0 0h10.4l-5.2 5.2z" fill="#fff"/></svg>
<svg style="left:713.3px;top:223.3px;" width="10.4" height="5.2" viewBox="0 0 10.4 5.2"><path d="M0 0h10.4l-5.2 5.2z" fill="#fff"/></svg>
<svg style="left:1189px;top:223.3px;" width="10.4" height="5.2" viewBox="0 0 10.4 5.2"><path d="M0 0h10.4l-5.2 5.2z" fill="#fff"/></svg>
<svg style="left:1089px;top:124.3px;" width="10.4" height="5.2" viewBox="0 0 10.4 5.2"><path d="M0 0h10.4l-5.2 5.2z" fill="#fff"/></svg>
<svg style="left:1107px;top:168.3px;" width="10.4" height="5.2" viewBox="0 0 10.4 5.2"><path d="M0 0h10.4l-5.2 5.2z" fill="#fff"/></svg>
<svg style="left:1350.8px;top:125px;" width="10.4" height="5.2" viewBox="0 0 10.4 5.2"><path d="M0 0h10.4l-5.2 5.2z" fill="#fff"/></svg>
<svg style="left:42px;top:125px;" width="40" height="40"><use href="#pinbig" width="100%" height="100%"/></svg>
<svg style="left:141.5px;top:116px;" width="47" height="56"><use href="#copy" width="100%" height="100%"/></svg>
<svg style="left:229px;top:113.5px;" width="40" height="58.5"><use href="#paste" width="100%" height="100%"/></svg>
<svg style="left:302px;top:114px;" width="21" height="28"><use href="#cut" width="100%" height="100%"/></svg>
<svg style="left:298.6px;top:164px;" width="29" height="17.5"><use href="#copypath" width="100%" height="100%"/></svg>
<svg style="left:303px;top:201.5px;" width="20" height="28"><use href="#pasteshort" width="100%" height="100%"/></svg>
<svg style="left:513.7px;top:116px;" width="54" height="58.5"><use href="#moveto" width="100%" height="100%"/></svg>
<svg style="left:598px;top:113px;" width="54" height="59"><use href="#copyto" width="100%" height="100%"/></svg>
<svg style="left:696px;top:121px;" width="46" height="46" viewBox="0 0 46 46"><path d="M2.5 2.5l41 41M43.5 2.5l-41 41" stroke="#d9281f" stroke-width="5" fill="none"/></svg>
<svg style="left:775px;top:117.5px;" width="57" height="52"><use href="#rename" width="100%" height="100%"/></svg>
<svg style="left:886px;top:118.8px;" width="36.4" height="54.3"><use href="#newfolder" width="100%" height="100%"/></svg>
<svg style="left:956.5px;top:114px;" width="29" height="28.5"><use href="#newitem" width="100%" height="100%"/></svg>
<svg style="left:955px;top:157.5px;" width="27" height="29"><use href="#easy" width="100%" height="100%"/></svg>
<svg style="left:1173.8px;top:116px;" width="43" height="56"><use href="#propbig" width="100%" height="100%"/></svg>
<svg style="left:1252.5px;top:112.5px;" width="32" height="32"><use href="#firefox" width="100%" height="100%"/></svg>
<svg style="left:1256.5px;top:160px;" width="28" height="28"><use href="#edit" width="100%" height="100%"/></svg>
<svg style="left:1256px;top:206.5px;" width="28.5" height="28"><use href="#history" width="100%" height="100%"/></svg>
<svg style="left:1396.8px;top:114.8px;" width="26.5" height="26.5"><use href="#selall" width="100%" height="100%"/></svg>
<svg style="left:1397.5px;top:160px;" width="25" height="25"><use href="#selnone" width="100%" height="100%"/></svg>
<svg style="left:1396.8px;top:202.5px;" width="26.5" height="26.5"><use href="#selinv" width="100%" height="100%"/></svg>
<div style="left:200px;top:295px;width:1245px;height:62px;background:#191919;border:1px solid #535353;box-sizing:border-box;"></div>
<div style="left:1382px;top:296px;width:1px;height:60px;background:#222;"></div>
<div style="left:1457px;top:295px;width:802px;height:62px;background:#191919;border:1px solid #535353;box-sizing:border-box;"></div>
<svg style="left:15.5px;top:316px;" width="25" height="22" viewBox="0 0 25 22"><path d="M11.500 1.700L3 11l8.500 9.300M3.500 11h21" stroke="#fff" stroke-width="4" fill="none"/></svg>
<svg style="left:74px;top:316px;" width="25" height="22" viewBox="0 0 25 22"><path d="M13.500 1.700l8.500 9.300-8.500 9.300M21.500 11H0.500" stroke="#7a7a7a" stroke-width="4" fill="none"/></svg>
<svg style="left:125px;top:321px;" width="18" height="13" viewBox="0 0 18 13"><path d="M2 2.5l7 7 7-7" stroke="#fff" stroke-width="3" fill="none"/></svg>
<svg style="left:164px;top:316px;" width="22" height="25" viewBox="0 0 22 25"><path d="M2 11.500L11 2.500l9 9M11 3v21" stroke="#fff" stroke-width="4" fill="none"/></svg>
<svg style="left:208px;top:312.6px;" width="19" height="27.5"><use href="#fold" width="100%" height="100%"/></svg>
<svg style="left:247.6px;top:320px;" width="11" height="14.5" viewBox="0 0 11 14.5"><path d="M1.5 1.5l6 5.7-6 5.7" stroke="#7d7d7d" stroke-width="4" fill="none"/></svg>
<svg style="left:364.9px;top:320px;" width="11" height="14.5" viewBox="0 0 11 14.5"><path d="M1.5 1.5l6 5.7-6 5.7" stroke="#7d7d7d" stroke-width="4" fill="none"/></svg>
<svg style="left:475.3px;top:320px;" width="11" height="14.5" viewBox="0 0 11 14.5"><path d="M1.5 1.5l6 5.7-6 5.7" stroke="#7d7d7d" stroke-width="4" fill="none"/></svg>
<svg style="left:630.5px;top:320px;" width="11" height="14.5" viewBox="0 0 11 14.5"><path d="M1.5 1.5l6 5.7-6 5.7" stroke="#7d7d7d" stroke-width="4" fill="none"/></svg>
<span class="t" style="left:271.89px;top:311.73px;font-size:22.7px;line-height:30px;color:#ffffff;letter-spacing:-0.375px;-webkit-text-stroke:0.2px #191919;">This PC</span>
<span class="t" style="left:388.42px;top:311.73px;font-size:22.7px;line-height:30px;color:#ffffff;letter-spacing:-0.590px;-webkit-text-stroke:0.2px #191919;">OS (C:)</span>
<span class="t" style="left:499.14px;top:311.73px;font-size:22.7px;line-height:30px;color:#ffffff;letter-spacing:0.253px;-webkit-text-stroke:0.2px #191919;">BI_dat_tool</span>
<span class="t" style="left:653.97px;top:311.73px;font-size:22.7px;line-height:30px;color:#ffffff;letter-spacing:0.615px;-webkit-text-stroke:0.2px #191919;">SingleFolder</span>
<svg style="left:1342px;top:321px;" width="20" height="14" viewBox="0 0 20 14"><path d="M2 2.5l8 8 8-8" stroke="#9a9a9a" stroke-width="3.4" fill="none"/></svg>
<svg style="left:1403px;top:315px;" width="22" height="24" viewBox="0 0 22 24"><path d="M7.500 4.900A8.200 8.200 0 1 0 18.600 9" stroke="#8c8c8c" stroke-width="3.300" fill="none"/><path d="M9.300 2.900H19.250V11.200" stroke="#8c8c8c" stroke-width="3.300" fill="none"/></svg>
<svg style="left:1485px;top:313px;" width="27" height="27" viewBox="0 0 27 27"><circle cx="16.5" cy="9.5" r="7.3" stroke="#9a9a9a" stroke-width="1.8" fill="none"/><path d="M11.3 14.7L1.5 24.8" stroke="#9a9a9a" stroke-width="1.8" fill="none"/></svg>
<span class="t" style="left:1537.67px;top:312.13px;font-size:22.7px;line-height:30px;color:#8d8d8d;letter-spacing:0.335px;-webkit-text-stroke:0.2px #191919;">Search SingleFolder</span>
<svg style="left:57.7px;top:375.7px;" width="18.4" height="27.3"><use href="#fold" width="100%" height="100%"/></svg>
<span class="t" style="left:89.66px;top:375.40px;font-size:22.5px;line-height:29px;color:#ffffff;letter-spacing:0.325px;-webkit-text-stroke:0.2px #191919;">UnknownFaces</span>
<svg style="left:57.7px;top:423.7px;" width="18.4" height="27.3"><use href="#fold" width="100%" height="100%"/></svg>
<span class="t" style="left:90.38px;top:423.40px;font-size:22.5px;line-height:29px;color:#ffffff;letter-spacing:0.556px;-webkit-text-stroke:0.2px #191919;">Stored</span>
<svg style="left:57.7px;top:471.7px;" width="18.4" height="27.3"><use href="#fold" width="100%" height="100%"/></svg>
<span class="t" style="left:89.95px;top:471.40px;font-size:22.5px;line-height:29px;color:#ffffff;letter-spacing:2.243px;-webkit-text-stroke:0.2px #191919;">bin</span>
<svg style="left:57.7px;top:519.7px;" width="18.4" height="27.3"><use href="#fold" width="100%" height="100%"/></svg>
<span class="t" style="left:89.55px;top:519.40px;font-size:22.5px;line-height:29px;color:#ffffff;letter-spacing:0.435px;-webkit-text-stroke:0.2px #191919;">Blue Iris 5</span>
<svg style="left:57.7px;top:567.7px;" width="18.4" height="27.3"><use href="#fold" width="100%" height="100%"/></svg>
<span class="t" style="left:90.38px;top:567.40px;font-size:22.5px;line-height:29px;color:#ffffff;letter-spacing:0.570px;-webkit-text-stroke:0.2px #191919;">SingleFolder</span>
<svg style="left:57.7px;top:615.7px;" width="18.4" height="27.3"><use href="#fold" width="100%" height="100%"/></svg>
<span class="t" style="left:90.38px;top:615.40px;font-size:22.5px;line-height:29px;color:#ffffff;letter-spacing:0.245px;-webkit-text-stroke:0.2px #191919;">System32</span>
<svg style="left:402.5px;top:377.7px;" width="21" height="20.7"><use href="#pinsm" width="100%" height="100%"/></svg>
<svg style="left:402.5px;top:425.7px;" width="21" height="20.7"><use href="#pinsm" width="100%" height="100%"/></svg>
<svg style="left:440.8px;top:377.9px;" width="11.4" height="9.4" viewBox="0 0 11.4 9.4"><path d="M0 9.400V6.200L5.700 0L11.400 6.200V9.400L5.700 3.500z" fill="#858585"/></svg>
<svg style="left:37px;top:677px;" width="32" height="30"><use href="#thispc" width="100%" height="100%"/></svg>
<span class="t" style="left:74.49px;top:679.40px;font-size:22.5px;line-height:29px;color:#ffffff;letter-spacing:-0.359px;-webkit-text-stroke:0.2px #191919;">This PC</span>
<svg style="left:54px;top:723.4px;" width="31" height="31"><use href="#obj3d" width="100%" height="100%"/></svg>
<span class="t" style="left:90.54px;top:727.40px;font-size:22.5px;line-height:29px;color:#ffffff;letter-spacing:0.642px;-webkit-text-stroke:0.2px #191919;">3D Objects</span>
<svg style="left:54px;top:771.4px;" width="31" height="31"><use href="#netdrive" width="100%" height="100%"/></svg>
<span class="t" style="left:90.44px;top:775.40px;font-size:22.5px;line-height:29px;color:#ffffff;letter-spacing:0.807px;-webkit-text-stroke:0.2px #191919;">andytran on Andy-Tran-Lucid</span>
<svg style="left:54px;top:819.4px;" width="31" height="31"><use href="#desktop" width="100%" height="100%"/></svg>
<span class="t" style="left:89.55px;top:823.40px;font-size:22.5px;line-height:29px;color:#ffffff;letter-spacing:1.025px;-webkit-text-stroke:0.2px #191919;">Desktop</span>
<svg style="left:54px;top:867.4px;" width="31" height="31"><use href="#docs" width="100%" height="100%"/></svg>
<span class="t" style="left:89.55px;top:871.40px;font-size:22.5px;line-height:29px;color:#ffffff;letter-spacing:1.145px;-webkit-text-stroke:0.2px #191919;">Documents</span>
<svg style="left:54px;top:915.4px;" width="31" height="31"><use href="#downl" width="100%" height="100%"/></svg>
<span class="t" style="left:89.55px;top:919.40px;font-size:22.5px;line-height:29px;color:#ffffff;letter-spacing:0.943px;-webkit-text-stroke:0.2px #191919;">Downloads</span>
<svg style="left:54px;top:963.4px;" width="31" height="31"><use href="#music" width="100%" height="100%"/></svg>
<span class="t" style="left:89.55px;top:967.40px;font-size:22.5px;line-height:29px;color:#ffffff;letter-spacing:1.271px;-webkit-text-stroke:0.2px #191919;">Music</span>
<svg style="left:54px;top:1011.4px;" width="31" height="31"><use href="#pics" width="100%" height="100%"/></svg>
<span class="t" style="left:89.55px;top:1015.40px;font-size:22.5px;line-height:29px;color:#ffffff;letter-spacing:0.340px;-webkit-text-stroke:0.2px #191919;">Pictures</span>
<svg style="left:54px;top:1059.4px;" width="31" height="31"><use href="#videos" width="100%" height="100%"/></svg>
<span class="t" style="left:91.30px;top:1063.40px;font-size:22.5px;line-height:29px;color:#ffffff;letter-spacing:0.503px;-webkit-text-stroke:0.2px #191919;">Videos</span>
<svg style="left:54px;top:1107.4px;" width="31" height="31"><use href="#osdrive" width="100%" height="100%"/></svg>
<span class="t" style="left:90.33px;top:1111.40px;font-size:22.5px;line-height:29px;color:#ffffff;letter-spacing:-0.531px;-webkit-text-stroke:0.2px #191919;">OS (C:)</span>
<div style="left:1276px;top:364px;width:1.3px;height:52px;background:#6a6a6a;"></div>
<div style="left:1652px;top:364px;width:1.3px;height:52px;background:#6a6a6a;"></div>
<div style="left:1888px;top:364px;width:1.3px;height:52px;background:#6a6a6a;"></div>
<div style="left:2116px;top:364px;width:1.3px;height:52px;background:#6a6a6a;"></div>
<span class="t" style="left:504.15px;top:377.70px;font-size:22.5px;line-height:29px;color:#e4e4e4;letter-spacing:1.742px;-webkit-text-stroke:0.2px #202020;">Name</span>
<span class="t" style="left:1288.15px;top:377.70px;font-size:22.5px;line-height:29px;color:#e4e4e4;letter-spacing:1.289px;-webkit-text-stroke:0.2px #202020;">Date modified</span>
<span class="t" style="left:1664.99px;top:377.70px;font-size:22.5px;line-height:29px;color:#e4e4e4;letter-spacing:0.628px;-webkit-text-stroke:0.2px #202020;">Type</span>
<span class="t" style="left:1900.78px;top:377.70px;font-size:22.5px;line-height:29px;color:#e4e4e4;letter-spacing:-0.116px;-webkit-text-stroke:0.2px #202020;">Size</span>
<svg style="left:877px;top:364px;" width="16" height="9" viewBox="0 0 16 9"><path d="M1 8L7.7 1.3 14.4 8" stroke="#b5b5b5" stroke-width="1.2" fill="none"/></svg>
<svg style="left:2248.8px;top:378.2px;" width="11.4" height="9.4" viewBox="0 0 11.4 9.4"><path d="M0 9.400V6.200L5.700 0L11.400 6.200V9.400L5.700 3.500z" fill="#858585"/></svg>
<div style="left:499.7px;top:458.7px;width:1609px;height:42.6px;background:#777777;"></div>
<div style="left:499.7px;top:794.7px;width:1609px;height:42.6px;background:#4d4d4d;"></div>
<svg style="left:511.8px;top:422.8px;" width="21.4" height="28"><use href="#jpgico" width="100%" height="100%"/></svg>
<span class="t" style="left:547.03px;top:425.70px;font-size:22.5px;line-height:29px;color:#ffffff;letter-spacing:0.283px;-webkit-text-stroke:0.2px #202020;">OverviewPTZ.20240315_050000.1163169.5-0.02.jpg</span>
<span class="t" style="left:1288.94px;top:425.70px;font-size:22.5px;line-height:29px;color:#ececec;letter-spacing:0.816px;-webkit-text-stroke:0.2px #202020;">3/23/2024 5:24 PM</span>
<span class="t" style="left:1664.95px;top:425.70px;font-size:22.5px;line-height:29px;color:#ececec;letter-spacing:-0.545px;-webkit-text-stroke:0.2px #202020;">JPG File</span>
<span class="t" style="left:2039.90px;top:425.70px;font-size:22.5px;line-height:29px;color:#ececec;letter-spacing:0.124px;-webkit-text-stroke:0.2px #202020;">51 KB</span>
<svg style="left:512.2px;top:465.5px;" width="21.6" height="26"><use href="#jsonico" width="100%" height="100%"/></svg>
<span class="t" style="left:547.03px;top:467.70px;font-size:22.5px;line-height:29px;color:#ffffff;letter-spacing:0.252px;-webkit-text-stroke:0.2px #777777;">OverviewPTZ.20240315_050000.1163169.5-0.02.json</span>
<span class="t" style="left:1288.94px;top:467.70px;font-size:22.5px;line-height:29px;color:#ececec;letter-spacing:0.816px;-webkit-text-stroke:0.2px #777777;">3/23/2024 5:24 PM</span>
<span class="t" style="left:1664.95px;top:467.70px;font-size:22.5px;line-height:29px;color:#ececec;letter-spacing:0.005px;-webkit-text-stroke:0.2px #777777;">JSON File</span>
<span class="t" style="left:2052.49px;top:467.70px;font-size:22.5px;line-height:29px;color:#ececec;letter-spacing:0.140px;-webkit-text-stroke:0.2px #777777;">1 KB</span>
<svg style="left:511.8px;top:506.8px;" width="21.4" height="28"><use href="#jpgico" width="100%" height="100%"/></svg>
<span class="t" style="left:547.03px;top:509.70px;font-size:22.5px;line-height:29px;color:#ffffff;letter-spacing:0.283px;-webkit-text-stroke:0.2px #202020;">OverviewPTZ.20240315_050000.1163169.5-0.03.jpg</span>
<span class="t" style="left:1288.94px;top:509.70px;font-size:22.5px;line-height:29px;color:#ececec;letter-spacing:0.816px;-webkit-text-stroke:0.2px #202020;">3/23/2024 5:24 PM</span>
<span class="t" style="left:1664.95px;top:509.70px;font-size:22.5px;line-height:29px;color:#ececec;letter-spacing:-0.545px;-webkit-text-stroke:0.2px #202020;">JPG File</span>
<span class="t" style="left:2039.90px;top:509.70px;font-size:22.5px;line-height:29px;color:#ececec;letter-spacing:0.124px;-webkit-text-stroke:0.2px #202020;">51 KB</span>
<svg style="left:512.2px;top:549.5px;" width="21.6" height="26"><use href="#jsonico" width="100%" height="100%"/></svg>
<span class="t" style="left:547.03px;top:551.70px;font-size:22.5px;line-height:29px;color:#ffffff;letter-spacing:0.252px;-webkit-text-stroke:0.2px #202020;">OverviewPTZ.20240315_050000.1163169.5-0.03.json</span>
<span class="t" style="left:1288.94px;top:551.70px;font-size:22.5px;line-height:29px;color:#ececec;letter-spacing:0.816px;-webkit-text-stroke:0.2px #202020;">3/23/2024 5:24 PM</span>
<span class="t" style="left:1664.95px;top:551.70px;font-size:22.5px;line-height:29px;color:#ececec;letter-spacing:0.005px;-webkit-text-stroke:0.2px #202020;">JSON File</span>
<span class="t" style="left:2052.49px;top:551.70px;font-size:22.5px;line-height:29px;color:#ececec;letter-spacing:0.140px;-webkit-text-stroke:0.2px #202020;">1 KB</span>
<svg style="left:511.8px;top:590.8px;" width="21.4" height="28"><use href="#jpgico" width="100%" height="100%"/></svg>
<span class="t" style="left:547.03px;top:593.70px;font-size:22.5px;line-height:29px;color:#ffffff;letter-spacing:0.283px;-webkit-text-stroke:0.2px #202020;">OverviewPTZ.20240315_050000.1163169.5-0.04.jpg</span>
<span class="t" style="left:1288.94px;top:593.70px;font-size:22.5px;line-height:29px;color:#ececec;letter-spacing:0.816px;-webkit-text-stroke:0.2px #202020;">3/23/2024 5:24 PM</span>
<span class="t" style="left:1664.95px;top:593.70px;font-size:22.5px;line-height:29px;color:#ececec;letter-spacing:-0.545px;-webkit-text-stroke:0.2px #202020;">JPG File</span>
<span class="t" style="left:2039.90px;top:593.70px;font-size:22.5px;line-height:29px;color:#ececec;letter-spacing:0.124px;-webkit-text-stroke:0.2px #202020;">51 KB</span>
<svg style="left:512.2px;top:633.5px;" width="21.6" height="26"><use href="#jsonico" width="100%" height="100%"/></svg>
<span class="t" style="left:547.03px;top:635.70px;font-size:22.5px;line-height:29px;color:#ffffff;letter-spacing:0.252px;-webkit-text-stroke:0.2px #202020;">OverviewPTZ.20240315_050000.1163169.5-0.04.json</span>
<span class="t" style="left:1288.94px;top:635.70px;font-size:22.5px;line-height:29px;color:#ececec;letter-spacing:0.816px;-webkit-text-stroke:0.2px #202020;">3/23/2024 5:24 PM</span>
<span class="t" style="left:1664.95px;top:635.70px;font-size:22.5px;line-height:29px;color:#ececec;letter-spacing:0.005px;-webkit-text-stroke:0.2px #202020;">JSON File</span>
<span class="t" style="left:2052.49px;top:635.70px;font-size:22.5px;line-height:29px;color:#ececec;letter-spacing:0.140px;-webkit-text-stroke:0.2px #202020;">1 KB</span>
<svg style="left:511.8px;top:674.8px;" width="21.4" height="28"><use href="#jpgico" width="100%" height="100%"/></svg>
<span class="t" style="left:547.03px;top:677.70px;font-size:22.5px;line-height:29px;color:#ffffff;letter-spacing:0.283px;-webkit-text-stroke:0.2px #202020;">OverviewPTZ.20240315_050000.1163169.5-0.05.jpg</span>
<span class="t" style="left:1288.94px;top:677.70px;font-size:22.5px;line-height:29px;color:#ececec;letter-spacing:0.816px;-webkit-text-stroke:0.2px #202020;">3/23/2024 5:24 PM</span>
<span class="t" style="left:1664.95px;top:677.70px;font-size:22.5px;line-height:29px;color:#ececec;letter-spacing:-0.545px;-webkit-text-stroke:0.2px #202020;">JPG File</span>
<span class="t" style="left:2039.90px;top:677.70px;font-size:22.5px;line-height:29px;color:#ececec;letter-spacing:0.124px;-webkit-text-stroke:0.2px #202020;">51 KB</span>
<svg style="left:512.2px;top:717.5px;" width="21.6" height="26"><use href="#jsonico" width="100%" height="100%"/></svg>
<span class="t" style="left:547.03px;top:719.70px;font-size:22.5px;line-height:29px;color:#ffffff;letter-spacing:0.252px;-webkit-text-stroke:0.2px #202020;">OverviewPTZ.20240315_050000.1163169.5-0.05.json</span>
<span class="t" style="left:1288.94px;top:719.70px;font-size:22.5px;line-height:29px;color:#ececec;letter-spacing:0.816px;-webkit-text-stroke:0.2px #202020;">3/23/2024 5:24 PM</span>
<span class="t" style="left:1664.95px;top:719.70px;font-size:22.5px;line-height:29px;color:#ececec;letter-spacing:0.005px;-webkit-text-stroke:0.2px #202020;">JSON File</span>
<span class="t" style="left:2052.49px;top:719.70px;font-size:22.5px;line-height:29px;color:#ececec;letter-spacing:0.140px;-webkit-text-stroke:0.2px #202020;">1 KB</span>
<svg style="left:511.8px;top:758.8px;" width="21.4" height="28"><use href="#jpgico" width="100%" height="100%"/></svg>
<span class="t" style="left:547.03px;top:761.70px;font-size:22.5px;line-height:29px;color:#ffffff;letter-spacing:0.283px;-webkit-text-stroke:0.2px #202020;">OverviewPTZ.20240315_050000.1163169.5-0.06.jpg</span>
<span class="t" style="left:1288.94px;top:761.70px;font-size:22.5px;line-height:29px;color:#ececec;letter-spacing:0.816px;-webkit-text-stroke:0.2px #202020;">3/23/2024 5:24 PM</span>
<span class="t" style="left:1664.95px;top:761.70px;font-size:22.5px;line-height:29px;color:#ececec;letter-spacing:-0.545px;-webkit-text-stroke:0.2px #202020;">JPG File</span>
<span class="t" style="left:2039.90px;top:761.70px;font-size:22.5px;line-height:29px;color:#ececec;letter-spacing:0.124px;-webkit-text-stroke:0.2px #202020;">51 KB</span>
<svg style="left:512.2px;top:801.5px;" width="21.6" height="26"><use href="#jsonico" width="100%" height="100%"/></svg>
<span class="t" style="left:547.03px;top:803.70px;font-size:22.5px;line-height:29px;color:#ffffff;letter-spacing:0.252px;-webkit-text-stroke:0.2px #4d4d4d;">OverviewPTZ.20240315_050000.1163169.5-0.06.json</span>
<span class="t" style="left:1288.94px;top:803.70px;font-size:22.5px;line-height:29px;color:#ececec;letter-spacing:0.816px;-webkit-text-stroke:0.2px #4d4d4d;">3/23/2024 5:24 PM</span>
<span class="t" style="left:1664.95px;top:803.70px;font-size:22.5px;line-height:29px;color:#ececec;letter-spacing:0.005px;-webkit-text-stroke:0.2px #4d4d4d;">JSON File</span>
<span class="t" style="left:2052.49px;top:803.70px;font-size:22.5px;line-height:29px;color:#ececec;letter-spacing:0.140px;-webkit-text-stroke:0.2px #4d4d4d;">1 KB</span>
<svg style="left:511.8px;top:842.8px;" width="21.4" height="28"><use href="#jpgico" width="100%" height="100%"/></svg>
<span class="t" style="left:547.08px;top:845.70px;font-size:22.5px;line-height:29px;color:#ffffff;letter-spacing:0.341px;-webkit-text-stroke:0.2px #202020;">SidewalkLeft.20240315_050000.1132087.5-0.01.jpg</span>
<span class="t" style="left:1288.94px;top:845.70px;font-size:22.5px;line-height:29px;color:#ececec;letter-spacing:0.816px;-webkit-text-stroke:0.2px #202020;">3/23/2024 5:24 PM</span>
<span class="t" style="left:1664.95px;top:845.70px;font-size:22.5px;line-height:29px;color:#ececec;letter-spacing:-0.545px;-webkit-text-stroke:0.2px #202020;">JPG File</span>
<span class="t" style="left:2039.90px;top:845.70px;font-size:22.5px;line-height:29px;color:#ececec;letter-spacing:0.124px;-webkit-text-stroke:0.2px #202020;">56 KB</span>
<svg style="left:512.2px;top:885.5px;" width="21.6" height="26"><use href="#jsonico" width="100%" height="100%"/></svg>
<span class="t" style="left:547.08px;top:887.70px;font-size:22.5px;line-height:29px;color:#ffffff;letter-spacing:0.307px;-webkit-text-stroke:0.2px #202020;">SidewalkLeft.20240315_050000.1132087.5-0.01.json</span>
<span class="t" style="left:1288.94px;top:887.70px;font-size:22.5px;line-height:29px;color:#ececec;letter-spacing:0.816px;-webkit-text-stroke:0.2px #202020;">3/23/2024 5:24 PM</span>
<span class="t" style="left:1664.95px;top:887.70px;font-size:22.5px;line-height:29px;color:#ececec;letter-spacing:0.005px;-webkit-text-stroke:0.2px #202020;">JSON File</span>
<span class="t" style="left:2052.49px;top:887.70px;font-size:22.5px;line-height:29px;color:#ececec;letter-spacing:0.140px;-webkit-text-stroke:0.2px #202020;">1 KB</span>
<svg style="left:511.8px;top:926.8px;" width="21.4" height="28"><use href="#jpgico" width="100%" height="100%"/></svg>
<span class="t" style="left:547.08px;top:929.70px;font-size:22.5px;line-height:29px;color:#ffffff;letter-spacing:0.341px;-webkit-text-stroke:0.2px #202020;">SidewalkLeft.20240315_050000.1132087.5-0.02.jpg</span>
<span class="t" style="left:1288.94px;top:929.70px;font-size:22.5px;line-height:29px;color:#ececec;letter-spacing:0.816px;-webkit-text-stroke:0.2px #202020;">3/23/2024 5:24 PM</span>
<span class="t" style="left:1664.95px;top:929.70px;font-size:22.5px;line-height:29px;color:#ececec;letter-spacing:-0.545px;-webkit-text-stroke:0.2px #202020;">JPG File</span>
<span class="t" style="left:2039.90px;top:929.70px;font-size:22.5px;line-height:29px;color:#ececec;letter-spacing:0.124px;-webkit-text-stroke:0.2px #202020;">55 KB</span>
<svg style="left:512.2px;top:969.5px;" width="21.6" height="26"><use href="#jsonico" width="100%" height="100%"/></svg>
<span class="t" style="left:547.08px;top:971.70px;font-size:22.5px;line-height:29px;color:#ffffff;letter-spacing:0.307px;-webkit-text-stroke:0.2px #202020;">SidewalkLeft.20240315_050000.1132087.5-0.02.json</span>
<span class="t" style="left:1288.94px;top:971.70px;font-size:22.5px;line-height:29px;color:#ececec;letter-spacing:0.816px;-webkit-text-stroke:0.2px #202020;">3/23/2024 5:24 PM</span>
<span class="t" style="left:1664.95px;top:971.70px;font-size:22.5px;line-height:29px;color:#ececec;letter-spacing:0.005px;-webkit-text-stroke:0.2px #202020;">JSON File</span>
<span class="t" style="left:2052.49px;top:971.70px;font-size:22.5px;line-height:29px;color:#ececec;letter-spacing:0.140px;-webkit-text-stroke:0.2px #202020;">1 KB</span>
<svg style="left:511.8px;top:1010.8px;" width="21.4" height="28"><use href="#jpgico" width="100%" height="100%"/></svg>
<span class="t" style="left:547.08px;top:1013.70px;font-size:22.5px;line-height:29px;color:#ffffff;letter-spacing:0.341px;-webkit-text-stroke:0.2px #202020;">SidewalkLeft.20240315_050000.1132087.5-0.03.jpg</span>
<span class="t" style="left:1288.94px;top:1013.70px;font-size:22.5px;line-height:29px;color:#ececec;letter-spacing:0.816px;-webkit-text-stroke:0.2px #202020;">3/23/2024 5:24 PM</span>
<span class="t" style="left:1664.95px;top:1013.70px;font-size:22.5px;line-height:29px;color:#ececec;letter-spacing:-0.545px;-webkit-text-stroke:0.2px #202020;">JPG File</span>
<span class="t" style="left:2039.90px;top:1013.70px;font-size:22.5px;line-height:29px;color:#ececec;letter-spacing:0.124px;-webkit-text-stroke:0.2px #202020;">55 KB</span>
<svg style="left:512.2px;top:1053.5px;" width="21.6" height="26"><use href="#jsonico" width="100%" height="100%"/></svg>
<span class="t" style="left:547.08px;top:1055.70px;font-size:22.5px;line-height:29px;color:#ffffff;letter-spacing:0.307px;-webkit-text-stroke:0.2px #202020;">SidewalkLeft.20240315_050000.1132087.5-0.03.json</span>
<span class="t" style="left:1288.94px;top:1055.70px;font-size:22.5px;line-height:29px;color:#ececec;letter-spacing:0.816px;-webkit-text-stroke:0.2px #202020;">3/23/2024 5:24 PM</span>
<span class="t" style="left:1664.95px;top:1055.70px;font-size:22.5px;line-height:29px;color:#ececec;letter-spacing:0.005px;-webkit-text-stroke:0.2px #202020;">JSON File</span>
<span class="t" style="left:2052.49px;top:1055.70px;font-size:22.5px;line-height:29px;color:#ececec;letter-spacing:0.140px;-webkit-text-stroke:0.2px #202020;">1 KB</span>
<svg style="left:511.8px;top:1094.8px;" width="21.4" height="28"><use href="#jpgico" width="100%" height="100%"/></svg>
<span class="t" style="left:547.08px;top:1097.70px;font-size:22.5px;line-height:29px;color:#ffffff;letter-spacing:0.341px;-webkit-text-stroke:0.2px #202020;">SidewalkLeft.20240315_050000.1132087.5-0.04.jpg</span>
<span class="t" style="left:1288.94px;top:1097.70px;font-size:22.5px;line-height:29px;color:#ececec;letter-spacing:0.816px;-webkit-text-stroke:0.2px #202020;">3/23/2024 5:24 PM</span>
<span class="t" style="left:1664.95px;top:1097.70px;font-size:22.5px;line-height:29px;color:#ececec;letter-spacing:-0.545px;-webkit-text-stroke:0.2px #202020;">JPG File</span>
<span class="t" style="left:2039.90px;top:1097.70px;font-size:22.5px;line-height:29px;color:#ececec;letter-spacing:0.124px;-webkit-text-stroke:0.2px #202020;">55 KB</span>
</body></html>
